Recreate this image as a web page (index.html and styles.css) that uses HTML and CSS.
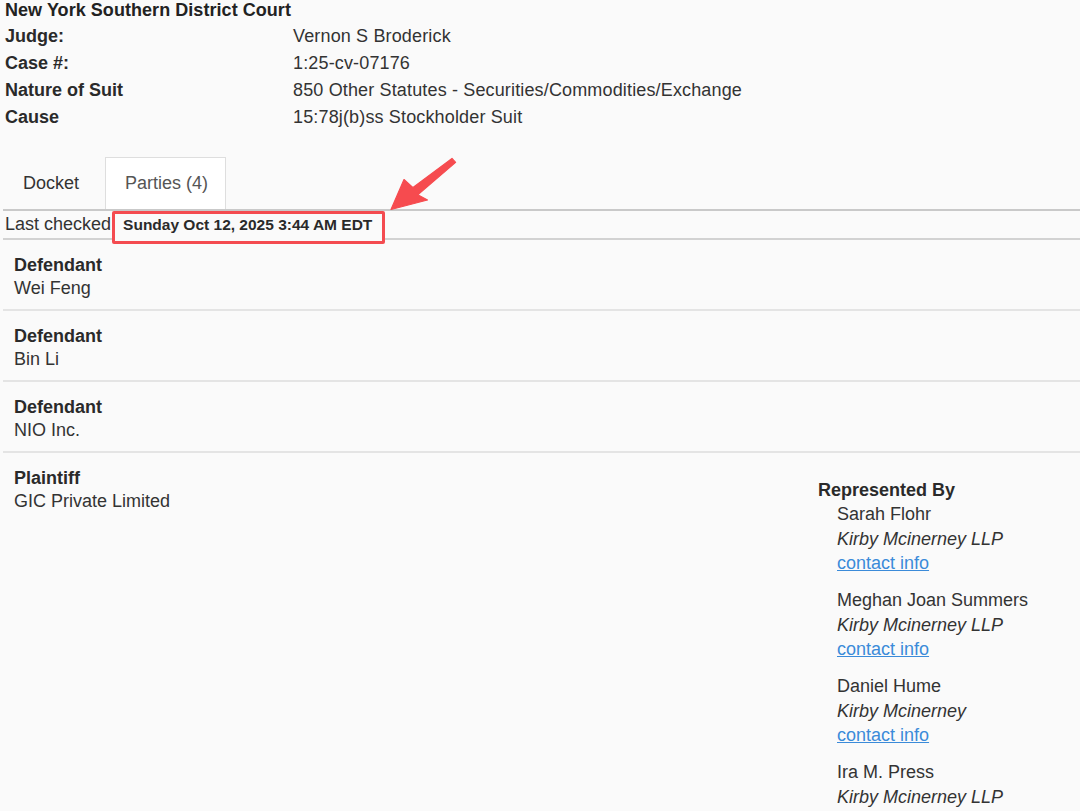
FILE: index.html
```html
<!DOCTYPE html>
<html lang="en">
<head>
<meta charset="utf-8">
<title>Case – Parties</title>
<link rel="stylesheet" href="styles.css">
</head>
<body>
<header class="case">
  <div class="court">New York Southern District Court</div>
  <dl class="meta">
    <dt>Judge:</dt><dd>Vernon S Broderick</dd>
    <dt>Case #:</dt><dd>1:25-cv-07176</dd>
    <dt>Nature of Suit</dt><dd>850 Other Statutes - Securities/Commodities/Exchange</dd>
    <dt>Cause</dt><dd>15:78j(b)ss Stockholder Suit</dd>
  </dl>
</header>

<nav class="tabs">
  <a class="tab">Docket</a>
  <a class="tab active">Parties (4)</a>
</nav>

<div class="checked">Last checked <span class="stamp">Sunday Oct 12, 2025 3:44 AM EDT</span></div>

<ul class="parties">
  <li class="party">
    <div class="who"><div class="role">Defendant</div><div class="name">Wei Feng</div></div>
  </li>
  <li class="party">
    <div class="who"><div class="role">Defendant</div><div class="name">Bin Li</div></div>
  </li>
  <li class="party">
    <div class="who"><div class="role">Defendant</div><div class="name">NIO Inc.</div></div>
  </li>
  <li class="party">
    <div class="who"><div class="role">Plaintiff</div><div class="name">GIC Private Limited</div></div>
    <div class="counsel">
      <div class="rep-title">Represented By</div>
      <div class="attorney">
        <div>Sarah Flohr</div>
        <div class="firm">Kirby Mcinerney LLP</div>
        <a class="contact" href="#">contact info</a>
      </div>
      <div class="attorney">
        <div>Meghan Joan Summers</div>
        <div class="firm">Kirby Mcinerney LLP</div>
        <a class="contact" href="#">contact info</a>
      </div>
      <div class="attorney">
        <div>Daniel Hume</div>
        <div class="firm">Kirby Mcinerney</div>
        <a class="contact" href="#">contact info</a>
      </div>
      <div class="attorney">
        <div>Ira M. Press</div>
        <div class="firm">Kirby Mcinerney LLP</div>
      </div>
    </div>
  </li>
</ul>

<svg class="arrow" width="1080" height="811" viewBox="0 0 1080 811" aria-hidden="true">
  <polygon points="391,209.5 404,179.5 413,187.6 452,158.4 455.6,162.4 417.8,194.8 427.5,200" fill="#f64b4f" stroke="#f64b4f" stroke-width="1.2" stroke-linejoin="round"/>
</svg>
</body>
</html>
```

FILE: styles.css
```css
html, body {
  margin: 0;
  padding: 0;
}

body {
  background: #fafafa;
  color: #333;
  font-family: "Liberation Sans", Arial, Helvetica, sans-serif;
  font-size: 18px;
  height: 811px;
  overflow: hidden;
  position: relative;
}

.case {
  padding-left: 5px;
}

.court {
  font-weight: bold;
  color: #222;
  line-height: 20px;
  margin-bottom: 3px;
  letter-spacing: 0.05px;
}

.meta {
  display: grid;
  grid-template-columns: 288px 1fr;
  margin: 0;
  line-height: 27px;
}

.meta dt {
  font-weight: bold;
  color: #2a2a2a;
}

.meta dd {
  margin: 0;
  letter-spacing: 0.15px;
}

.tabs {
  display: flex;
  margin: 26px 0 0 3px;
  border-bottom: 2px solid #c9c9c9;
}

.tab {
  display: block;
  line-height: 51px;
  padding: 0 17px 0 19px;
  border: 1px solid transparent;
  border-bottom: 0;
  margin-right: 8px;
  color: #333;
}

.tab.active {
  background: #fff;
  border-color: #dedede;
  color: #555;
}

.checked {
  margin-left: 3px;
  padding-left: 2px;
  line-height: 27px;
  border-bottom: 2px solid #d2d2d2;
}

.stamp {
  position: relative;
  z-index: 0;
  margin-left: 7px;
  font-weight: bold;
  font-size: 15.5px;
  color: #2a2a2a;
}

.stamp::before {
  content: "";
  position: absolute;
  left: -11px;
  right: -13px;
  top: -5px;
  bottom: -11px;
  border: 3px solid #f44b50;
  border-radius: 2px;
  background: #fafafa;
  z-index: -1;
}

.parties {
  list-style: none;
  margin: 0 0 0 3px;
  padding: 0;
}

.party {
  display: grid;
  grid-template-columns: 1fr 262px;
  padding: 13.5px 0 9.5px 11px;
  border-bottom: 2px solid #e4e4e4;
  line-height: 23px;
}

.party:last-child {
  border-bottom: 0;
}

.role {
  font-weight: bold;
  color: #2a2a2a;
}

.counsel {
  margin-top: 12.5px;
}

.rep-title {
  font-weight: bold;
  color: #2a2a2a;
  line-height: 23px;
}

.attorney {
  padding-left: 19px;
  line-height: 24.5px;
  margin-bottom: 12.5px;
}

.firm {
  font-style: italic;
}

.contact {
  color: #3b8bd9;
  text-decoration: underline;
}

.arrow {
  position: absolute;
  left: 0;
  top: 0;
  pointer-events: none;
}
```
